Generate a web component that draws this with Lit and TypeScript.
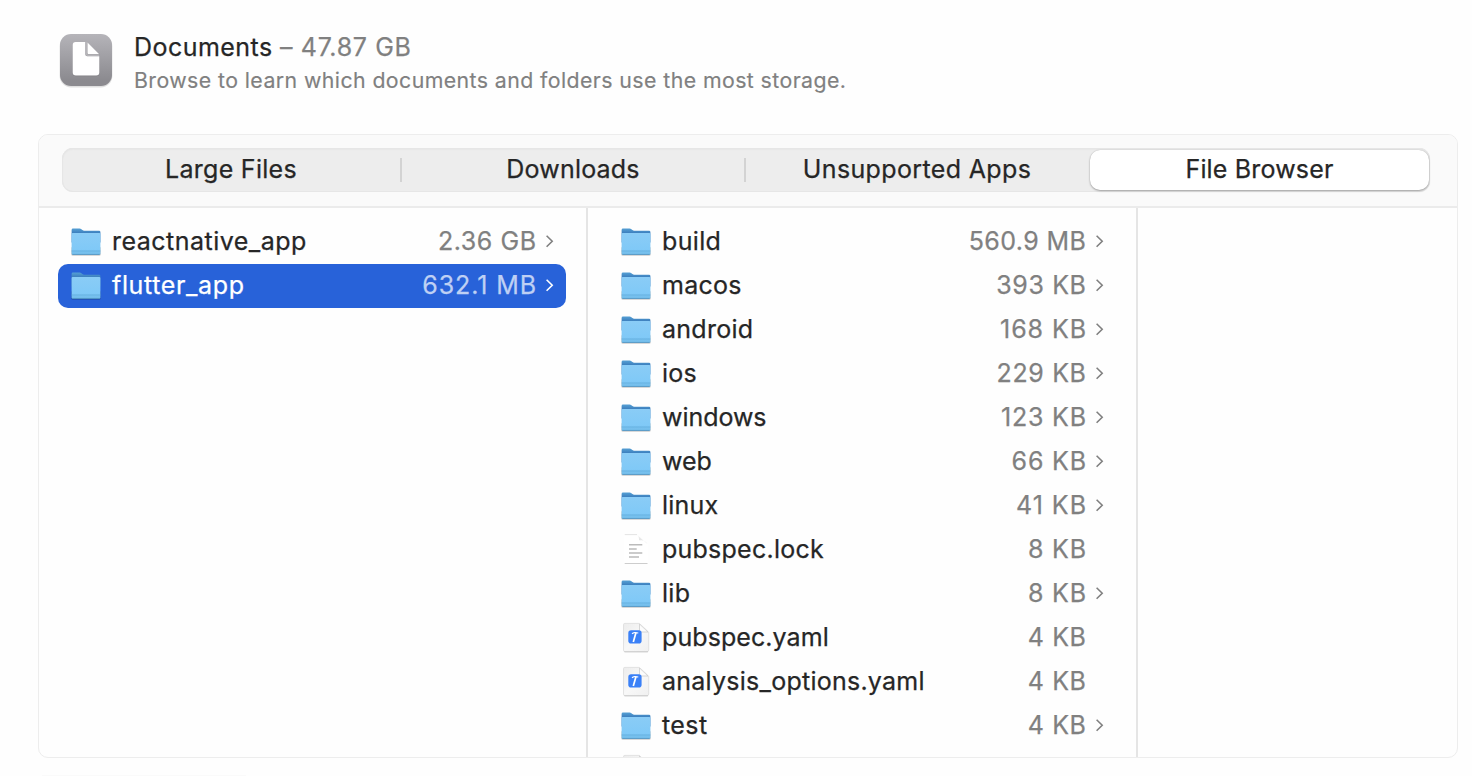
import { LitElement, html, css, svg, nothing } from "lit";
import { customElement, property } from "lit/decorators.js";

type Kind = "folder" | "text" | "xcode";
interface Entry {
  name: string;
  size: string;
  kind: Kind;
  selected?: boolean;
  track: number;
  sizeTrack: number;
}

const row = (name: string, track: number, size: string, sizeTrack: number, kind: Kind = "folder", selected = false): Entry =>
  ({ name, track, size, sizeTrack, kind, selected });

const projects: Entry[] = [
  row("reactnative_app", 0.48, "2.36 GB", 0.55),
  row("flutter_app", 0.64, "632.1 MB", 0.9, "folder", true),
];

const contents: Entry[] = [
  row("build", 0.35, "560.9 MB", 0.42),
  row("macos", 0.25, "393 KB", 0.65),
  row("android", 0.28, "168 KB", 0.92),
  row("ios", 0.2, "229 KB", 0.65),
  row("windows", -0.05, "123 KB", 0.8),
  row("web", -0.1, "66 KB", 0.8),
  row("linux", 0.2, "41 KB", 1),
  row("pubspec.lock", 0.24, "8 KB", 0.8, "text"),
  row("lib", 0.3, "8 KB", 0.8),
  row("pubspec.yaml", 0.08, "4 KB", 0.6, "xcode"),
  row("analysis_options.yaml", 0.25, "4 KB", 0.6, "xcode"),
  row("test", 0.4, "4 KB", 0.6),
  row("", 0, "", 0, "xcode"),
];

const tabs = [
  { label: "Large Files", track: 0.28 },
  { label: "Downloads", track: 0.2 },
  { label: "Unsupported Apps", track: 0.36 },
  { label: "File Browser", track: 0.17, active: true },
];

const folderArt = svg`
  <defs>
    <linearGradient id="front" x1="0" y1="0" x2="0" y2="1"><stop offset="0" stop-color="#8accf6"/><stop offset=".75" stop-color="#80c9f7"/><stop offset="1" stop-color="#6fb9e6"/></linearGradient>
    <linearGradient id="back" x1="0" y1="0" x2="0" y2="1"><stop offset="0" stop-color="#559fd4"/><stop offset=".4" stop-color="#3677b8"/></linearGradient>
  </defs>
  <g transform="translate(0 .5)">
    <rect x="1.300" y="20" width="29.400" height="9.300" rx="1.600" fill="#000" opacity=".2"/>
    <path d="M1.600 3.500q0-1.400 1.400-1.400H9.600q1 0 1.800.7l1 .8q.8.600 1.800.600H29q1.400 0 1.400 1.400V16H1.600z" fill="url(#back)"/>
    <path d="M1.600 7.600q0-1.100 1.100-1.100H29.300q1.100 0 1.100 1.100V26.900q0 1.400-1.400 1.400H3q-1.400 0-1.400-1.400z" fill="url(#front)"/>
    <path d="M1.600 24.500h28.800" stroke="#5fa9da" stroke-width=".7"/>
    <path d="M2.300 28h27.400" stroke="#4c8fbd" stroke-width=".7"/>
  </g>`;

const textArt = svg`
  <defs><linearGradient id="fold" x1="0" y1="1" x2="1" y2="0"><stop offset=".2" stop-color="#d8d8d8"/><stop offset=".6" stop-color="#f3f3f3"/></linearGradient></defs>
  <path d="M4.500 .500H17L27.500 10V29.500H4.500z" fill="#fff"/>
  <path d="M4.800 .600H17" stroke="#e0e0e0" stroke-width=".9"/>
  <path d="M4.700 29.500H27.500" stroke="#cdcdcd" stroke-width="1"/>
  <path d="M16.500 .300C19 1.500 18.800 4 19.300 6.300C22.500 6.300 25.500 6.500 27.500 10z" fill="url(#fold)"/>
  <path d="M9 10.800h13.300M9 14.900h7.700M9 19h13.300M9 23.100h10" stroke="#bbbbbb" stroke-width="1.500"/>`;

const xcodeArt = svg`
  <defs><linearGradient id="sheet" x1="0" y1="0" x2="1" y2="1"><stop offset="0" stop-color="#ececec"/><stop offset=".5" stop-color="#f8f8f8"/><stop offset="1" stop-color="#f0f0f0"/></linearGradient></defs>
  <path d="M4.800 1.400H19.300L28.700 10V28Q28.700 29.700 27 29.700H5Q3.500 29.700 3.500 28V2.700Q3.500 1.400 4.800 1.400z" fill="url(#sheet)" stroke="#d9d9d9" stroke-width=".7"/>
  <path d="M4.300 29.800H28" stroke="#c4c4c4" stroke-width=".8"/>
  <path d="M19.300 1.400V8.800q0 1.200 1.200 1.200h8.200z" fill="#fcfcfc"/>
  <path d="M19.500 2V9q0 1 1 1H28z" fill="none" stroke="#c6c6c6" stroke-width=".7"/>
  <rect x="8.300" y="8.200" width="13.300" height="13.400" rx="2.800" fill="#3a80f7"/>
  <path d="M12.100 11.900Q13 10.400 15 10.600L18.300 11" stroke="#fff" stroke-width="1.200" fill="none"/>
  <path d="M16 10.600L13.300 19.900" stroke="#fff" stroke-width="1.700" fill="none"/>`;

@customElement("file-icon")
class FileIcon extends LitElement {
  @property() kind: Kind = "folder";
  static styles = css`
    :host { display: block; width: 32px; height: 32px; }
    .art { display: block; }
  `;
  render() {
    const art = { folder: folderArt, text: textArt, xcode: xcodeArt }[this.kind];
    return html`<svg class="art" width="32" height="32" viewBox="0 0 32 32">${art}</svg>`;
  }
}

@customElement("file-row")
class FileRow extends LitElement {
  @property({ attribute: false }) entry!: Entry;
  static styles = css`
    :host { display: block; }
    .row { height: 44px; display: flex; align-items: center; box-sizing: border-box; padding: 0 12px; border-radius: 10px; color: #262626; }
    .name, .size { line-height: 42px; height: 44px; white-space: nowrap; }
    .name { margin-left: 10px; flex: 1; }
    .size { color: #808080; }
    .chev { width: 18px; height: 44px; stroke: #808080; fill: none; }
    .selected { background: #2862d9; color: #fff; }
    .selected .size { color: #bfd0f4; }
    .selected .chev { stroke: #fff; }
  `;
  render() {
    const e = this.entry;
    return html`<div class="row ${e.selected ? "selected" : ""}">
      <file-icon .kind=${e.kind}></file-icon>
      <span class="name" style="letter-spacing:${e.track}px">${e.name}</span>
      <span class="size" style="letter-spacing:${e.sizeTrack}px;margin-right:${-e.sizeTrack}px">${e.size}</span>
      <svg class="chev" viewBox="0 0 18 44">${e.kind === "folder" ? svg`<path d="M10.600 15.800L16.200 21.300L10.600 26.800" stroke-width="1.600"/>` : nothing}</svg>
    </div>`;
  }
}

@customElement("app-root")
class AppRoot extends LitElement {
  static styles = css`
    :host { display: flex; flex-direction: column; box-sizing: border-box; width: 1472px; height: 776px; overflow: hidden; background: #fefefe; font: 25px/44px Inter, "Liberation Sans", sans-serif; -webkit-text-stroke: .25px currentColor; color: #262626; padding: 0 14px 0 38px; }
    .head { display: flex; height: 134px; box-sizing: border-box; padding: 30px 0 0 18px; flex: none; }
    .badge { display: block; width: 60px; height: 60px; flex: none; }
    .titles { padding-left: 18px; white-space: nowrap; }
    .title { line-height: 34px; height: 34px; letter-spacing: .45px; }
    .amount { color: #808080; letter-spacing: .66px; }
    .sub { font-size: 21.300px; line-height: 32px; letter-spacing: .42px; color: #808080; -webkit-text-stroke-width: .15px; }
    .panel { height: 624px; flex: none; box-sizing: border-box; border: 1px solid #ededed; border-radius: 10px; overflow: hidden; display: flex; flex-direction: column; }
    .toolbar { height: 73px; flex: none; box-sizing: border-box; background: #fafafa; border-bottom: 2px solid #ebebeb; padding: 13px 27px 0 23px; }
    .segments { display: flex; height: 44px; box-sizing: border-box; border-radius: 11px; background: #ededed; box-shadow: inset 0 0 0 1px #e6e6e6, inset 0 1px 2px #dedede; }
    .segment { display: flex; align-items: center; justify-content: center; flex: 0 0 340px; }
    .segment + .segment { flex-basis: 344px; }
    .segment:last-child { flex: 1; }
    .label { flex: 1; text-align: center; line-height: 42px; height: 44px; }
    .tick { width: 2px; height: 24px; background: #d3d3d3; }
    .spacer { width: 2px; }
    .active { background: #fff; border-radius: 10px; margin: 2px 1px 2px 0; box-shadow: 0 1px 2px #a0a0a0, 0 0 1px #b0b0b0; }
    .active .label { line-height: 38px; height: 40px; }
    .columns { flex: 1; display: flex; min-height: 0; }
    .column { box-sizing: border-box; width: 550px; flex: none; border-right: 2px solid #e5e5e5; padding: 12px 20px 0 20px; overflow: hidden; }
    .first { width: 549px; padding-left: 19px; }
    .next { height: 10px; margin: 17px 0 0 4px; width: 204px; border-top: 1px solid #fafafa; flex: none; }
  `;
  render() {
    return html`
      <header class="head">
        <svg class="badge" viewBox="0 0 60 60">
          <defs><linearGradient id="g" x1="0" y1="0" x2="0" y2="1"><stop offset="0" stop-color="#b5b4b9"/><stop offset=".9" stop-color="#8b8a8f"/></linearGradient></defs>
          <rect x="3.600" y="5" width="52.800" height="52.400" rx="11.500" fill="#000" opacity=".12"/>
          <rect x="4" y="4" width="52" height="52" rx="11" fill="url(#g)"/>
          <path d="M19.500 12.600H31L43.400 24V43q0 3.200-3.200 3.200H19.900q-3.200 0-3.200-3.200V15.500q0-2.900 2.900-2.900z" fill="#000" opacity=".12"/>
          <path d="M19.600 12H29.400V24.400q0 1.800 1.800 1.800H43.300V42.500q0 3-3 3H19.700q-3 0-3-3V15q0-3 2.900-3z" fill="#fff"/>
          <path d="M30.300 12V24q0 1.100 1.100 1.100H43.300" fill="none" stroke="#b6b5b9" stroke-width="1.800"/>
          <path d="M31.500 12.400L43 24H32.200q-.700 0-.700-.700z" fill="#fff"/>
        </svg>
        <div class="titles">
          <div class="title">Documents <span class="amount">– 47.87 GB</span></div>
          <div class="sub">Browse to learn which documents and folders use the most storage.</div>
        </div>
      </header>
      <section class="panel">
        <div class="toolbar">
          <div class="segments">
            ${tabs.map((t, i) => html`<div class="segment ${t.active ? "active" : ""}">
              <span class="label" style="letter-spacing:${t.track}px">${t.label}</span>
              ${i < 2 ? html`<i class="tick"></i>` : i === 2 ? html`<i class="spacer"></i>` : nothing}
            </div>`)}
          </div>
        </div>
        <div class="columns">
          <div class="column first">${projects.map((e) => html`<file-row .entry=${e}></file-row>`)}</div>
          <div class="column">${contents.map((e) => html`<file-row .entry=${e}></file-row>`)}</div>
        </div>
      </section>
      <div class="next"></div>`;
  }
}
